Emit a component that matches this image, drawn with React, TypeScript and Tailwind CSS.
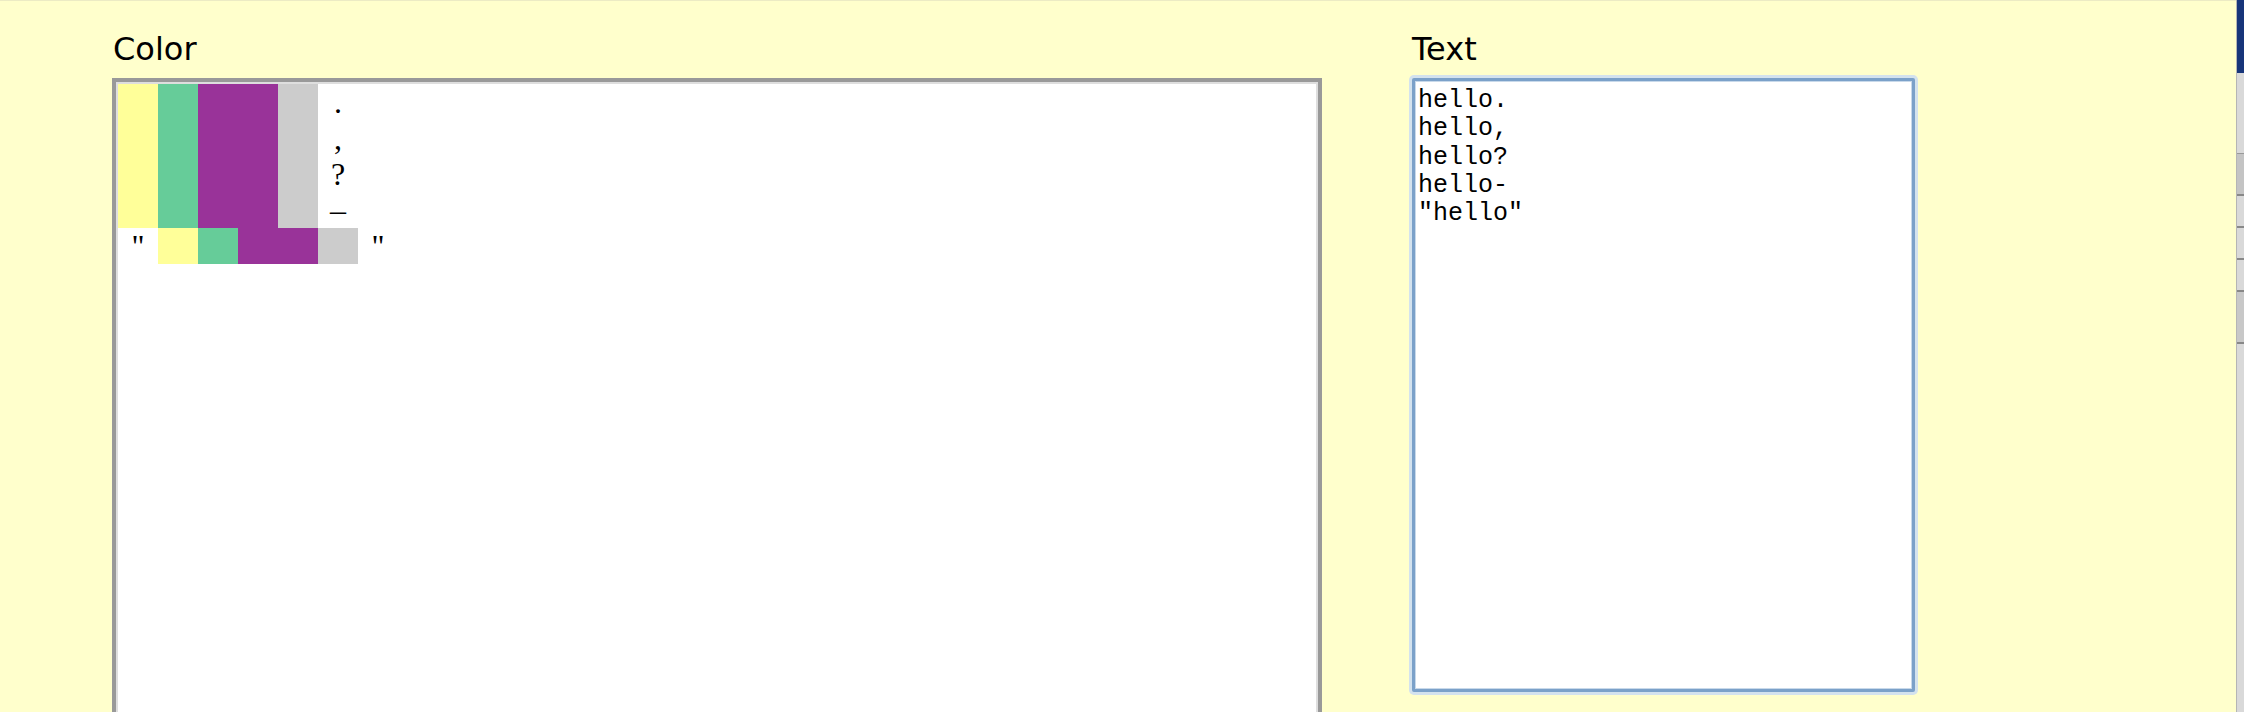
import React from 'react';

const cell = 'w-[40px] shrink-0';

const HelloBar: React.FC<{ tall?: boolean }> = ({ tall }) => {
  const h = tall ? 'h-[144px]' : 'h-[36px]';
  return (
    <>
      <div className={`${cell} ${h} bg-[#ffff99]`} />
      <div className={`${cell} ${h} bg-[#66cc99]`} />
      <div className={`w-[80px] shrink-0 ${h} bg-[#993399]`} />
      <div className={`${cell} ${h} bg-[#cccccc]`} />
    </>
  );
};

const App: React.FC = () => {
  const punct = ['.', ',', '?', '–'];
  const lines = 'hello.\nhello,\nhello?\nhello-\n"hello"';

  return (
    <div className="h-[712px] w-[2244px] flex overflow-hidden bg-[#ffffcc] font-['DejaVu_Sans',sans-serif]">
      <div className="flex-1 flex border-t border-[#ecebc4] pl-[112px] pt-[30px] gap-[90px]">
        {/* Color column */}
        <div className="flex flex-col w-[1210px]">
          <div className="text-[32px] leading-[37px] text-black pl-[1px]">Color</div>
          <div className="mt-[10px] h-[720px] shrink-0 border-4 border-[#999999] p-[2px] shadow-[inset_0_0_0_2px_#dedede] bg-white font-['Liberation_Serif',serif] text-[32px] text-black">
            <div className="flex">
              <HelloBar tall />
              <div className={`${cell} flex flex-col`}>
                {punct.map((p) => (
                  <div key={p} className="h-[36px] leading-[36px] text-center">
                    {p}
                  </div>
                ))}
              </div>
            </div>
            <div className="flex">
              <div className={`${cell} h-[36px] leading-[36px] text-center`}>"</div>
              <HelloBar />
              <div className={`${cell} h-[36px] leading-[36px] text-center`}>"</div>
            </div>
          </div>
        </div>

        {/* Text column */}
        <div className="flex flex-col">
          <div className="text-[32px] leading-[37px] text-black">Text</div>
          <textarea
            readOnly
            value={lines}
            className="mt-[10px] w-[503px] h-[614px] resize-none outline-none overflow-hidden bg-white border-[3px] border-[#7ba1c9] rounded-[2px] shadow-[0_0_0_3px_#d3e2ee,inset_0_0_0_1px_#c8d9ea] pt-[6px] pl-[3px] font-['Liberation_Mono',monospace] text-[25px] leading-[28.3px] text-black"
          />
        </div>
      </div>

      {/* sliver of the neighbouring window */}
      <div className="w-[8px] flex flex-col bg-[#d9d9d9] border-l border-[#b5b5b5]">
        <div className="h-[73px] bg-[#17357a]" />
        <div className="h-[80px]" />
        <div className="h-[1px] bg-[#999]" />
        <div className="h-[40px] bg-[#c4c4c4]" />
        <div className="h-[2px] bg-[#888]" />
        <div className="h-[30px]" />
        <div className="h-[2px] bg-[#888]" />
        <div className="h-[30px]" />
        <div className="h-[2px] bg-[#888]" />
        <div className="h-[30px]" />
        <div className="h-[2px] bg-[#888]" />
        <div className="h-[50px] bg-[#c8c8c8]" />
        <div className="h-[2px] bg-[#888]" />
      </div>
    </div>
  );
};

export default App;
